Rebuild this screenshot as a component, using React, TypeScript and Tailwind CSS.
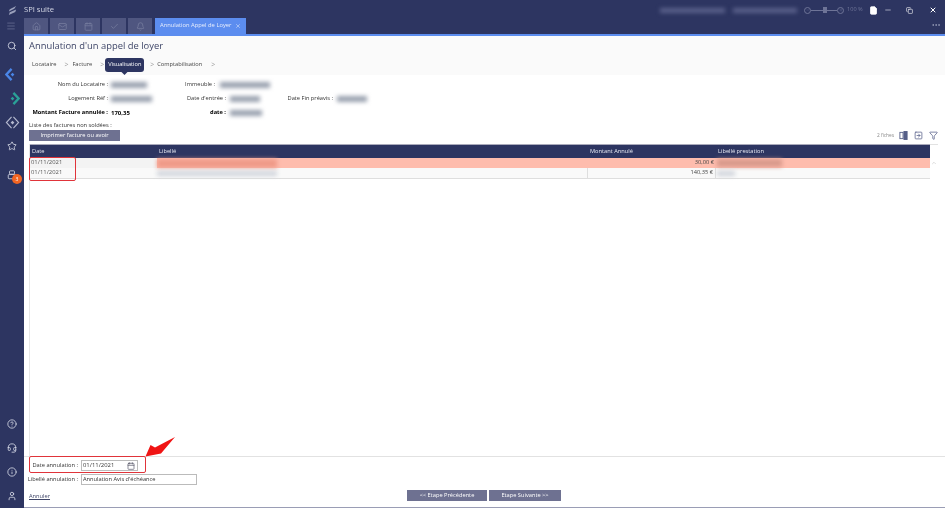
import React from "react";
import { Home, Mail, Calendar, Check, Bell, X, Search, Star, CircleHelp, Headset, Info, User, Menu, Minus, Plus, Ellipsis, File, Filter, Copy, SquareArrowRight, ChevronUp } from "lucide-react";

const tabs = [Home, Mail, Calendar, Check, Bell];

const Blur = ({ w, h = "h-[6px]", c = "bg-gray-400" }: { w: string; h?: string; c?: string }) => (
  <div className={`${w} ${h} ${c} blur-[2px]`} />
);

const Field = ({ label, w, gap = "ml-[4px]", bold, children }: { label: string; w: string; gap?: string; bold?: boolean; children: React.ReactNode }) => (
  <div className="flex items-center">
    <div className={`${w} flex justify-end whitespace-nowrap ${bold ? "font-bold text-black" : "text-[#333]"}`}>{label}</div>
    <div className={gap}>{children}</div>
  </div>
);

function Diamond({ color, part }: { color: string; part: "left" | "right" | "both" }) {
  return (
    <svg viewBox="0 0 16 16" className="w-[15px] h-[15px]" fill="none" stroke={color} strokeWidth={part === "both" ? 1.2 : 2.4}>
      {part !== "right" && <path d="M7 2 1.5 8 7 14" />}
      {part !== "left" && <path d="M9 2l5.5 6L9 14" />}
      <path d="M8 6 10 8 8 10 6 8z" fill={color} stroke="none" />
    </svg>
  );
}

const Sep = ({ ml }: { ml: string }) => <span className={`${ml} w-[3px] text-[7px] text-[#999]`}>&gt;</span>;

export default function App() {
  return (
    <div className="w-[945px] h-[508px] overflow-hidden flex flex-col bg-[#2d3561] text-[5.7px] leading-none font-['Open_Sans',sans-serif] relative blur-[0.35px]">
      {/* title bar */}
      <div className="h-[18px] flex items-center text-[#c9cde0] shrink-0 pt-[2px]">
        <div className="w-[24px] flex justify-center">
          <svg viewBox="0 0 12 12" className="w-[11px] h-[11px]" fill="#9aa0bb">
            <path d="M10 1 3 4.5 2 7l6-3zM10 5 3 8 2 11l7-3.5z" />
          </svg>
        </div>
        <span className="text-[7.6px] text-[#d5d8e6]">SPI suite</span>
        <div className="ml-auto flex items-center mr-[8px]">
          <Blur w="w-[65px]" h="h-[5px]" c="bg-[#59608a]" />
          <div className="w-[8px]" />
          <Blur w="w-[64px]" h="h-[5px]" c="bg-[#59608a]" />
          <div className="w-[7px]" />
          <div className="flex items-center text-[#6e7497]">
            <div className="w-[7px] h-[7px] rounded-full border border-[#6e7497] flex items-center justify-center"><Minus size={4} /></div>
            <div className="w-[12px] h-px bg-[#6e7497]" />
            <div className="w-[4px] h-[6px] bg-[#6e7497]" />
            <div className="w-[10px] h-px bg-[#6e7497]" />
            <div className="w-[7px] h-[7px] rounded-full border border-[#6e7497] flex items-center justify-center"><Plus size={4} /></div>
            <span className="ml-[3px] w-[15px] text-[5.6px] whitespace-nowrap">100 %</span>
          </div>
          <File size={9} className="ml-[7px] text-white" fill="white" />
          <Minus size={8} className="ml-[6px] text-[#d5d8e6]" />
          <Copy size={7} className="ml-[14px] text-white" />
          <X size={8} className="ml-[16px] text-white" strokeWidth={3} />
        </div>
      </div>

      {/* tabs */}
      <div className="h-[16px] flex items-end gap-[2px] shrink-0">
        <div className="w-[22px] h-full flex items-center justify-center text-[#646b90]"><Menu size={10} /></div>
        {tabs.map((Icon, i) => (
          <div key={i} className="w-[24px] h-[16px] bg-[#4f5680] flex items-center justify-center text-[#777d9f]">
            <Icon size={9} />
          </div>
        ))}
        <div className="w-[91px] h-[16px] bg-[#5c8def] flex items-center justify-between px-[5px] text-[#e8eefc] text-[5.8px] ml-[1px]">
          <span className="whitespace-nowrap">Annulation Appel de Loyer</span>
          <X size={6} />
        </div>
        <Ellipsis size={10} className="ml-auto mr-[4px] mb-[4px] text-[#9aa0bb]" />
      </div>

      <div className="flex flex-1 min-h-0">
        {/* sidebar */}
        <div className="w-[24px] shrink-0 flex flex-col items-center text-[#d5d8e6] pt-[7px]">
          <Search size={10} />
          <div className="mt-[16px]"><Diamond color="#4a86e8" part="left" /></div>
          <div className="mt-[9px]"><Diamond color="#2aa198" part="right" /></div>
          <div className="mt-[9px]"><Diamond color="#b5b9cf" part="both" /></div>
          <Star size={10} className="mt-[11px]" />
          <div className="relative mt-[19px] w-[10px] h-[10px]">
            <svg viewBox="0 0 12 12" className="w-[10px] h-[10px]" fill="none" stroke="#d5d8e6">
              <rect x="3" y="1" width="6" height="4" rx="1" />
              <rect x="1.5" y="5.5" width="9" height="5" rx="1" />
            </svg>
            <div className="absolute left-[5px] top-[4px] w-[10px] h-[10px] rounded-full bg-[#f26522] text-white text-[5px] flex items-center justify-center">3</div>
          </div>
          <div className="mt-auto flex flex-col items-center gap-[14px] pb-[7px]">
            <CircleHelp size={10} />
            <Headset size={10} />
            <Info size={10} />
            <User size={10} />
          </div>
        </div>

        {/* main */}
        <div className="flex-1 min-w-0 flex flex-col bg-white border-t-2 border-[#5c8def] text-[#333] border-b border-b-[#9a9db5]">
          <div className="h-[39px] bg-[#fafafa] pl-[5px] shrink-0">
            <div className="text-[9.4px] text-[#3f4668] h-[20px] flex items-center">Annulation d'un appel de loyer</div>
            <div className="flex items-center h-[15px] mt-[1px] pl-[3px] text-[#444] whitespace-nowrap">
              <span>Locataire</span>
              <Sep ml="ml-[8px]" />
              <span className="ml-[5px]">Facture</span>
              <Sep ml="ml-[8px]" />
              <span className="relative ml-[2px] w-[39px] bg-[#2d3561] text-white rounded-[3px] h-[14px] flex items-center justify-center">
                Visualisation
                <span className="absolute left-[17px] -bottom-[2px] w-[5px] h-[5px] bg-[#2d3561] rotate-45" />
              </span>
              <Sep ml="ml-[6px]" />
              <span className="ml-[4px]">Comptabilisation</span>
              <Sep ml="ml-[9px]" />
            </div>
          </div>

          {/* details */}
          <div className="grid grid-cols-[141px_100px_200px] gap-y-[8px] auto-rows-[6px] pt-[7px] pl-[5px] shrink-0">
            <Field label="Nom du Locataire :" w="w-[79px]" gap="ml-[3px]"><Blur w="w-[36px]" /></Field>
            <Field label="Immeuble :" w="w-[56px]" gap="ml-[5px]"><Blur w="w-[50px]" /></Field>
            <div />
            <Field label="Logement Réf :" w="w-[79px]" gap="ml-[3px]"><Blur w="w-[41px]" /></Field>
            <Field label="Date d'entrée :" w="w-[56px]" gap="ml-[4px]"><Blur w="w-[30px]" /></Field>
            <Field label="Date Fin préavis :" w="w-[63px]" gap="ml-[4px]"><Blur w="w-[30px]" /></Field>
            <Field label="Montant Facture annulée :" w="w-[79px]" gap="ml-[3px]" bold>
              <span className="font-bold text-black text-[6px]">170,35</span>
            </Field>
            <Field label="date :" w="w-[56px]" gap="ml-[4px]" bold><Blur w="w-[32px]" /></Field>
          </div>

          <div className="pl-[5px] mt-[7px] h-[6px] text-[#333] shrink-0">Liste des factures non soldées :</div>
          <div className="flex items-center pl-[5px] pr-[7px] mt-[1px] shrink-0 h-[11px]">
            <button className="w-[91px] h-[11px] bg-[#6e7191] text-white text-[5.7px] flex items-center justify-center">Imprimer facture ou avoir</button>
            <div className="ml-auto flex items-center text-[#555f88]">
              <span className="text-[4.8px] text-[#888] mr-[5px]">2 fiches</span>
              <svg viewBox="0 0 10 10" className="w-[9px] h-[9px]" fill="none" stroke="currentColor">
                <rect x="1" y="1.5" width="3.5" height="7" />
                <rect x="5.5" y="0.5" width="3.5" height="9" fill="currentColor" />
              </svg>
              <SquareArrowRight size={9} className="ml-[6px]" />
              <Filter size={9} className="ml-[6px]" />
            </div>
          </div>

          {/* table */}
          <div className="flex-1 min-h-0 mt-[3px] ml-[5px] mr-[7px] flex">
            <div className="flex-1 min-w-0 border-l border-[#e6e6e6] flex flex-col">
              <div className="grid grid-cols-[127px_431px_128px_215px] h-[14px] bg-[#2d3561] border-t border-[#aab] text-[#e6e8f2] items-center shrink-0">
                <div className="pl-[2px]">Date</div>
                <div className="pl-[2px]">Libellé</div>
                <div className="pl-[2px]">Montant Annulé</div>
                <div className="pl-[2px]">Libellé prestation</div>
              </div>
              <div className="grid grid-cols-[127px_431px_128px_215px] h-[10px] bg-[#febcad] items-center shrink-0">
                <div className="pl-[1px] h-full flex items-center bg-[#f3f3f3] text-[#555] text-[5.9px]">01/11/2021</div>
                <div className="h-full flex items-center"><Blur w="w-[120px]" h="h-[9px]" c="bg-[#ef9a88]" /></div>
                <div className="text-right pr-[2px] text-[#444]">30,00 €</div>
                <div className="pl-[1px]"><Blur w="w-[65px]" h="h-[8px]" c="bg-[#d99a8c]" /></div>
              </div>
              <div className="grid grid-cols-[127px_431px_128px_215px] h-[11px] bg-[#f9f9f9] border-b border-[#dedede] items-center shrink-0">
                <div className="pl-[1px] text-[#555] text-[5.9px]">01/11/2021</div>
                <div className="h-full flex items-center border-r border-[#dedede]"><Blur w="w-[120px]" h="h-[5px]" c="bg-gray-300" /></div>
                <div className="text-[#444] border-r border-[#dedede] h-full flex items-center justify-end pr-[2px]">140,35 €</div>
                <div className="pl-[1px]"><Blur w="w-[18px]" h="h-[5px]" c="bg-gray-300" /></div>
              </div>
            </div>
            <div className="w-[8px] shrink-0 border-t border-[#e2e2e2] pt-[15px] flex justify-center text-[#bbb]">
              <ChevronUp size={6} />
            </div>
          </div>

          {/* footer */}
          <div className="h-[51px] shrink-0 border-t border-[#e2e2e2] pl-[5px] flex flex-col text-[#333]">
            <div className="flex items-center mt-[3px] h-[11px]">
              <div className="w-[49px] flex justify-end whitespace-nowrap">Date annulation :</div>
              <div className="ml-[3px] w-[57px] h-[11px] border border-[#bbb] flex items-center justify-between pl-[1px] pr-[2px] text-[5.9px]">
                01/11/2021
                <Calendar size={8} className="text-[#556]" />
              </div>
            </div>
            <div className="flex items-center mt-[3px] h-[11px]">
              <div className="w-[49px] flex justify-end whitespace-nowrap">Libellé annulation :</div>
              <div className="ml-[3px] w-[116px] h-[11px] border border-[#bbb] flex items-center pl-[1px] whitespace-nowrap">Annulation Avis d'échéance</div>
            </div>
            <div className="flex items-center mt-[5px]">
              <a className="w-[20px] underline text-[#3f4668] mt-[2px]">Annuler</a>
              <div className="ml-[358px] flex gap-[2px]">
                <button className="w-[80px] h-[11px] bg-[#6e7191] text-white flex items-center justify-center">&lt;&lt; Etape Précédente</button>
                <button className="w-[72px] h-[11px] bg-[#6e7191] text-white flex items-center justify-center">Etape Suivante &gt;&gt;</button>
              </div>
            </div>
          </div>
        </div>
      </div>

      {/* annotations */}
      <div className="absolute left-[29px] top-[157px] w-[47px] h-[24px] border-[1.5px] border-[#e0343a] rounded-[2px]" />
      <div className="absolute left-[29px] top-[456px] w-[117px] h-[17px] border-[1.5px] border-[#e0343a] rounded-[2px]" />
      <svg className="absolute left-[142px] top-[434px] w-[36px] h-[26px]" viewBox="0 0 36 26">
        <path d="M33 3 19 19.5 3.5 22.5l5-11.5 4.5 2.5z" fill="#f01414" />
      </svg>
    </div>
  );
}
